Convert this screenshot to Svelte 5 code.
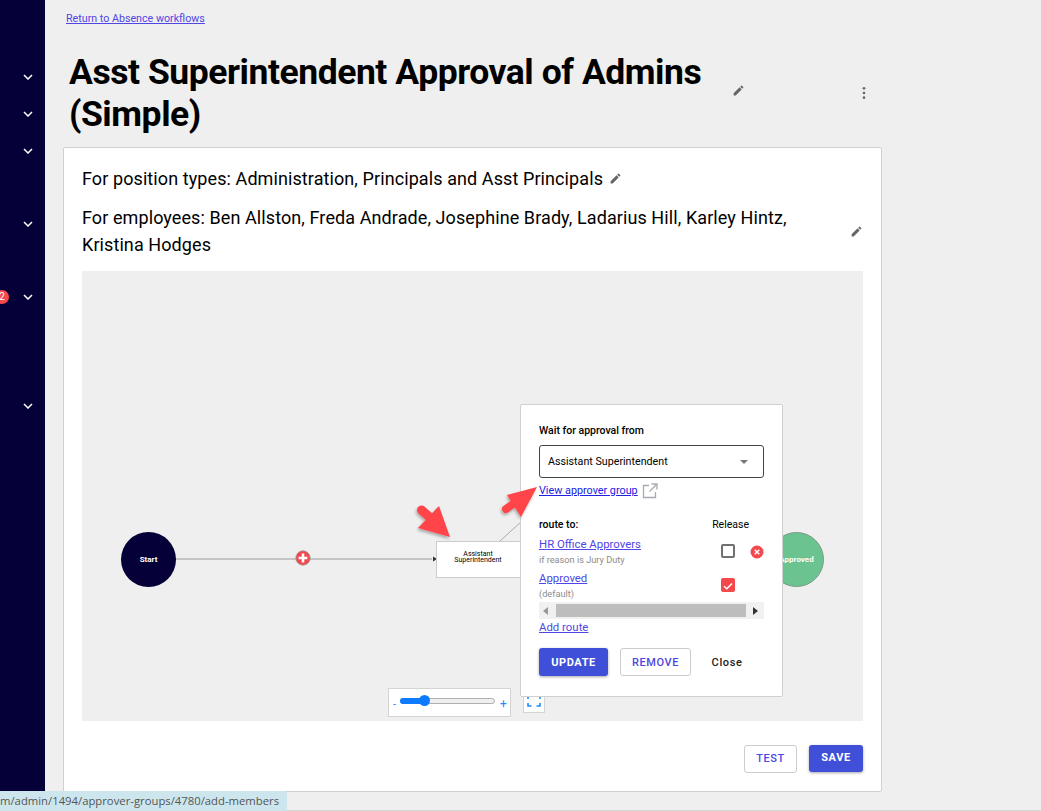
<script>
 const navRows = [
  { h: 37 }, { h: 37 }, { h: 73 }, { h: 73 }, { h: 109, badge: 2 }, { h: 37 }
 ];
 const routes = [
  { name: 'HR Office Approvers', note: 'if reason is Jury Duty', checked: false, removable: true },
  { name: 'Approved', note: '(default)', checked: true, removable: false }
 ];
 const editPath = 'M3 17.25V21h3.75L17.81 9.94l-3.75-3.75L3 17.25zM20.71 7.04a1 1 0 0 0 0-1.41l-2.34-2.34a1 1 0 0 0-1.41 0l-1.83 1.83 3.75 3.75 1.83-1.83z';
</script>

<div class="page">
 <aside class="nav">
  {#each navRows as row}
   <div class="nav-row" style="height: {row.h}px">
    {#if row.badge}<span class="badge">{row.badge}</span>{/if}
    <svg class="chev" viewBox="0 0 10 6" width="10" height="6"><path d="M1 1l4 4 4-4" fill="none" stroke="#fff" stroke-width="1.5" /></svg>
   </div>
  {/each}
 </aside>

 <main class="main">
  <a class="back" href="#top">Return to Absence workflows</a>
  <header class="title-row">
   <h1>Asst Superintendent Approval of Admins (Simple)</h1>
   <svg class="edit title-edit" viewBox="0 0 24 24"><path d={editPath} /></svg>
   <svg class="more" viewBox="0 0 24 24"><circle cx="12" cy="5" r="2" /><circle cx="12" cy="12" r="2" /><circle cx="12" cy="19" r="2" /></svg>
  </header>

  <section class="card">
   <div class="scope scope-first">
    <span>For position types: Administration, Principals and Asst Principals</span>
    <svg class="edit" viewBox="0 0 24 24"><path d={editPath} /></svg>
   </div>
   <div class="scope scope-second">
    <span class="people">For employees: Ben Allston, Freda Andrade, Josephine Brady, Ladarius Hill, Karley Hintz, Kristina Hodges</span>
    <svg class="edit" viewBox="0 0 24 24"><path d={editPath} /></svg>
   </div>

   <div class="canvas">
    <svg class="wires" width="781" height="450" viewBox="0 0 781 450">
     <line x1="93" y1="288" x2="350" y2="288" stroke="#c4c4c4" stroke-width="2" />
     <path d="M351 285.5l4 2.5-4 2.5z" fill="#333" />
     <line x1="418" y1="270" x2="440" y2="250" stroke="#aaa" stroke-width="1" />
    </svg>

    <div class="node circle start">Start</div>
    <div class="plus">
     <svg viewBox="0 0 16 16" width="16" height="16"><circle cx="8" cy="8" r="7.2" fill="#f4484d" stroke="#999" stroke-width="0.8" /><path d="M8 3.6v8.8M3.6 8h8.8" stroke="#fff" stroke-width="2.6" /></svg>
    </div>
    <div class="node step">Assistant<br />Superintendent</div>
    <div class="node circle approved">Approved</div>

    <div class="zoom-panel">
     <span class="sign">-</span>
     <div class="track"><div class="fill"></div><div class="knob"></div></div>
     <span class="sign plus-sign">+</span>
    </div>
    <div class="fit">
     <svg viewBox="0 0 14 12" width="14" height="12"><path d="M1 4V1h3.5M9.5 1H13v3M13 8v3H9.5M4.5 11H1V8" fill="none" stroke="#1a8cff" stroke-width="1.6" /></svg>
    </div>

    <div class="popover">
     <div class="label">Wait for approval from</div>
     <div class="select">
      <span>Assistant Superintendent</span>
      <i class="caret"></i>
     </div>
     <div class="view-line">
      <a class="view" href="#top">View approver group</a>
      <svg viewBox="0 0 16 16" width="16" height="16"><path d="M7 2.5H1.5v12h12V9M9.5 1H15v5.5M15 1L7.5 8.5" fill="none" stroke="#a9a9b2" stroke-width="1.3" /></svg>
     </div>

     <div class="routes-head">
      <span class="label">route to:</span>
      <span class="release">Release</span>
     </div>
     {#each routes as route}
      <div class="route">
       <div class="route-text">
        <a class="link" href="#top">{route.name}</a>
        <div class="note">{route.note}</div>
       </div>
       <div class="check {route.checked ? 'on' : ''}">
        {#if route.checked}
         <svg viewBox="0 0 14 14" width="14" height="14"><path d="M3 7.2l2.8 2.6L11 4.4" fill="none" stroke="#fff" stroke-width="1.5" /></svg>
        {/if}
       </div>
       <div class="remove-slot">
        {#if route.removable}
         <svg viewBox="0 0 14 14" width="14" height="14"><circle cx="7" cy="7" r="6.5" fill="#f4484d" /><path d="M4.7 4.7l4.6 4.6M9.3 4.7L4.7 9.3" stroke="#fff" stroke-width="1.5" /></svg>
        {/if}
       </div>
      </div>
     {/each}
     <div class="hscroll">
      <i class="arrow-l"></i>
      <div class="thumb"></div>
      <i class="arrow-r"></i>
     </div>
     <a class="link add" href="#top">Add route</a>
     <div class="actions">
      <button class="btn primary">UPDATE</button>
      <button class="btn outline remove">REMOVE</button>
      <button class="btn plain">Close</button>
     </div>
    </div>

    <svg class="callouts" width="781" height="450" viewBox="0 0 781 450">
     <defs>
      <filter id="arrow-shadow" x="-30%" y="-30%" width="160%" height="160%"><feDropShadow dx="-1" dy="2" stdDeviation="1.5" flood-color="#000" flood-opacity="0.3" /></filter>
     </defs>
     <g filter="url(#arrow-shadow)" fill="#ff4548">
      <path d="M368 266L336 257L357 235z" />
      <path d="M339.5 239L352 250" stroke="#ff4548" stroke-width="9" stroke-linecap="round" />
      <path d="M455 216L425 224L439 246z" />
      <path d="M424 238L434 231" stroke="#ff4548" stroke-width="8" stroke-linecap="round" />
     </g>
    </svg>
   </div>

   <footer class="card-foot">
    <button class="btn outline test">TEST</button>
    <button class="btn primary save">SAVE</button>
   </footer>
  </section>
 </main>

 <div class="status">m/admin/1494/approver-groups/4780/add-members</div>
</div>

<style>
 :global(body) {
  margin: 0;
  background: #efefef;
 }

 .page {
  position: relative;
  display: flex;
  height: 811px;
  overflow: hidden;
  font-family: Roboto, "Liberation Sans", sans-serif;
  color: #000;
  background: #efefef;
  box-shadow: inset 0 -1px 0 #d4d4d4;
 }

 .nav {
  width: 45px;
  flex: none;
  padding-top: 59px;
  background: #050038;
  box-sizing: border-box;
 }

 .nav-row {
  position: relative;
  box-sizing: border-box;
  padding: 15px 0 0 23px;
 }

 .chev {
  display: block;
 }

 .badge {
  position: absolute;
  left: -5px;
  top: 11px;
  width: 14px;
  height: 14px;
  border-radius: 50%;
  background: #f4484d;
  color: #fff;
  font-size: 10px;
  line-height: 14px;
  text-align: center;
 }

 .main {
  flex: 1;
  padding: 12px 0 0 18px;
  min-width: 0;
 }

 .back {
  display: block;
  margin-left: 3px;
  font-size: 10.7px;
  line-height: 14px;
  color: #4f46e5;
 }

 .title-row {
  display: flex;
  align-items: center;
  width: 819px;
  margin: 23px 0 11px;
  height: 87px;
 }

 h1 {
  width: 656px;
  margin: 0 0 0 6px;
  font-size: 35.5px;
  line-height: 42px;
  font-weight: 700;
  letter-spacing: -0.45px;
 }

 .edit {
  width: 13px;
  height: 13px;
  flex: none;
  fill: #666;
 }

 .title-edit {
  margin: 0 0 5px 7px;
 }

 .more {
  width: 16px;
  height: 16px;
  margin: 0 0 0 111px;
  fill: #666;
 }

 .card {
  width: 819px;
  height: 645px;
  padding: 17px 18px 0;
  background: #fff;
  border: 1px solid #d0d0d0;
  border-radius: 2px;
  box-sizing: border-box;
 }

 .scope {
  display: flex;
  align-items: center;
  font-size: 18px;
  line-height: 27px;
  letter-spacing: 0.09px;
 }

 .scope-first .edit {
  margin-left: 6px;
 }

 .scope-second {
  margin-top: 12px;
  justify-content: space-between;
 }

 .people {
  width: 740px;
 }

 .canvas {
  position: relative;
  width: 781px;
  height: 450px;
  margin-top: 13px;
  background: #efefef;
 }

 .wires,
 .callouts {
  position: absolute;
  left: 0;
  top: 0;
 }

 .callouts {
  pointer-events: none;
 }

 .node {
  position: absolute;
  box-sizing: border-box;
  display: flex;
  align-items: center;
  justify-content: center;
  text-align: center;
 }

 .circle {
  width: 55px;
  height: 55px;
  border-radius: 50%;
  color: #fff;
  font-size: 8px;
  font-weight: 700;
 }

 .start {
  left: 39px;
  top: 261px;
  background: #050038;
 }

 .approved {
  left: 687px;
  top: 261px;
  background: #6bc48f;
  border: 1px solid #7a9a88;
 }

 .plus {
  position: absolute;
  left: 213px;
  top: 279px;
  width: 16px;
  height: 16px;
 }

 .step {
  left: 354px;
  top: 270px;
  width: 90px;
  height: 37px;
  padding: 0 6px 6px 0;
  background: #fff;
  border: 1px solid #ccc;
  font-size: 7px;
  line-height: 6px;
 }

 .zoom-panel {
  position: absolute;
  left: 306px;
  top: 417px;
  width: 123px;
  height: 29px;
  display: flex;
  align-items: center;
  gap: 4px;
  padding: 0 4px;
  background: #fff;
  border: 1px solid #d4d4d4;
  box-sizing: border-box;
 }

 .sign {
  color: #1a8cff;
  font-size: 11px;
  margin-top: 3px;
 }

 .plus-sign {
  font-size: 12px;
  margin-left: 1px;
 }

 .track {
  position: relative;
  flex: none;
  width: 95px;
  height: 6px;
  margin-top: -4px;
  border: 1px solid #b0b0b0;
  border-radius: 3px;
  box-sizing: border-box;
  background: #efefef;
 }

 .fill {
  position: absolute;
  left: -1px;
  top: -1px;
  width: 27px;
  height: 6px;
  border-radius: 3px;
  background: #0d7bff;
 }

 .knob {
  position: absolute;
  left: 18px;
  top: -4px;
  width: 11px;
  height: 11px;
  border-radius: 50%;
  background: #0d7bff;
 }

 .fit {
  position: absolute;
  left: 441px;
  top: 424px;
  width: 22px;
  height: 18px;
  display: flex;
  align-items: flex-end;
  justify-content: center;
  padding-bottom: 5px;
  background: #fff;
  border: 1px solid #d4d4d4;
  box-sizing: border-box;
 }

 .popover {
  position: absolute;
  left: 438px;
  top: 133px;
  width: 263px;
  height: 293px;
  padding: 20px 18px 0;
  background: #fff;
  border: 1px solid #d0d0d0;
  border-radius: 2px;
  box-sizing: border-box;
 }

 .label {
  font-size: 10.5px;
  line-height: 12px;
  font-weight: 500;
 }

 .select {
  display: flex;
  align-items: center;
  justify-content: space-between;
  height: 33px;
  margin-top: 8px;
  padding: 0 15px 0 8px;
  border: 1px solid #444;
  border-radius: 3px;
  font-size: 10.7px;
  box-sizing: border-box;
 }

 .caret {
  width: 0;
  height: 0;
  border-left: 4px solid transparent;
  border-right: 4px solid transparent;
  border-top: 4px solid #777;
 }

 .view-line {
  display: flex;
  align-items: center;
  gap: 4px;
  height: 17px;
  margin-top: 4px;
 }

 .view-line svg {
  margin-top: 1px;
 }

 .view {
  font-size: 10.8px;
  color: #2020e0;
 }

 .routes-head {
  display: flex;
  justify-content: space-between;
  align-items: center;
  margin-top: 20px;
  padding-right: 15px;
  line-height: 12px;
 }

 .release {
  font-size: 10.5px;
 }

 .route {
  display: flex;
  align-items: center;
  height: 34px;
 }

 .route-text {
  flex: 1;
  padding-top: 5px;
 }

 .link {
  display: block;
  font-size: 11.4px;
  line-height: 14px;
  color: #4f46e5;
 }

 .note {
  margin-top: 3px;
  font-size: 9.2px;
  line-height: 11px;
  color: #8c8c8c;
 }

 .check {
  width: 14px;
  height: 14px;
  margin-top: 6px;
  border: 2px solid #707070;
  border-radius: 2px;
  box-sizing: border-box;
 }

 .check.on {
  border: 0;
  background: #f4484d;
 }

 .remove-slot {
  width: 14px;
  height: 14px;
  margin: 6px 0 0 15px;
 }

 .hscroll {
  display: flex;
  align-items: center;
  justify-content: space-between;
  height: 17px;
  margin-top: 3px;
  padding: 0 6px 0 4px;
  background: #f1f1f1;
  box-sizing: border-box;
 }

 .thumb {
  width: 190px;
  height: 13px;
  background: #bdbdbd;
 }

 .arrow-l,
 .arrow-r {
  width: 0;
  height: 0;
  border-top: 4px solid transparent;
  border-bottom: 4px solid transparent;
 }

 .arrow-l {
  border-right: 5px solid #999;
 }

 .arrow-r {
  border-left: 5px solid #333;
 }

 .add {
  margin-top: 1px;
 }

 .actions {
  display: flex;
  align-items: center;
  margin-top: 14px;
 }

 .btn {
  height: 28px;
  padding: 0;
  font-family: inherit;
  font-size: 11px;
  font-weight: 500;
  letter-spacing: 0.6px;
  border-radius: 3px;
  box-sizing: border-box;
  cursor: pointer;
 }

 .primary {
  width: 69px;
  color: #fff;
  font-weight: 700;
  border: 0;
  background: #3f4fd8;
  box-shadow: 0 1px 3px rgba(0, 0, 0, 0.35);
 }

 .outline {
  color: #4f46e5;
  background: #fff;
  border: 1px solid #ccc;
 }

 .remove {
  width: 71px;
  margin-left: 12px;
 }

 .plain {
  width: 72px;
  color: #222;
  background: none;
  border: 0;
 }

 .card-foot {
  display: flex;
  justify-content: flex-end;
  align-items: flex-start;
  gap: 12px;
  margin-top: 24px;
 }

 .test {
  width: 53px;
  padding-bottom: 1px;
 }

 .save {
  width: 54px;
  height: 27px;
  padding-bottom: 2px;
 }

 .status {
  position: absolute;
  left: 0;
  bottom: 0;
  width: 287px;
  height: 20px;
  padding-right: 8px;
  text-align: right;
  background: #cde6ee;
  border-top-right-radius: 3px;
  box-sizing: border-box;
  font-family: "Open Sans", sans-serif;
  font-size: 11.3px;
  line-height: 20px;
  color: #555;
  white-space: nowrap;
 }
</style>
